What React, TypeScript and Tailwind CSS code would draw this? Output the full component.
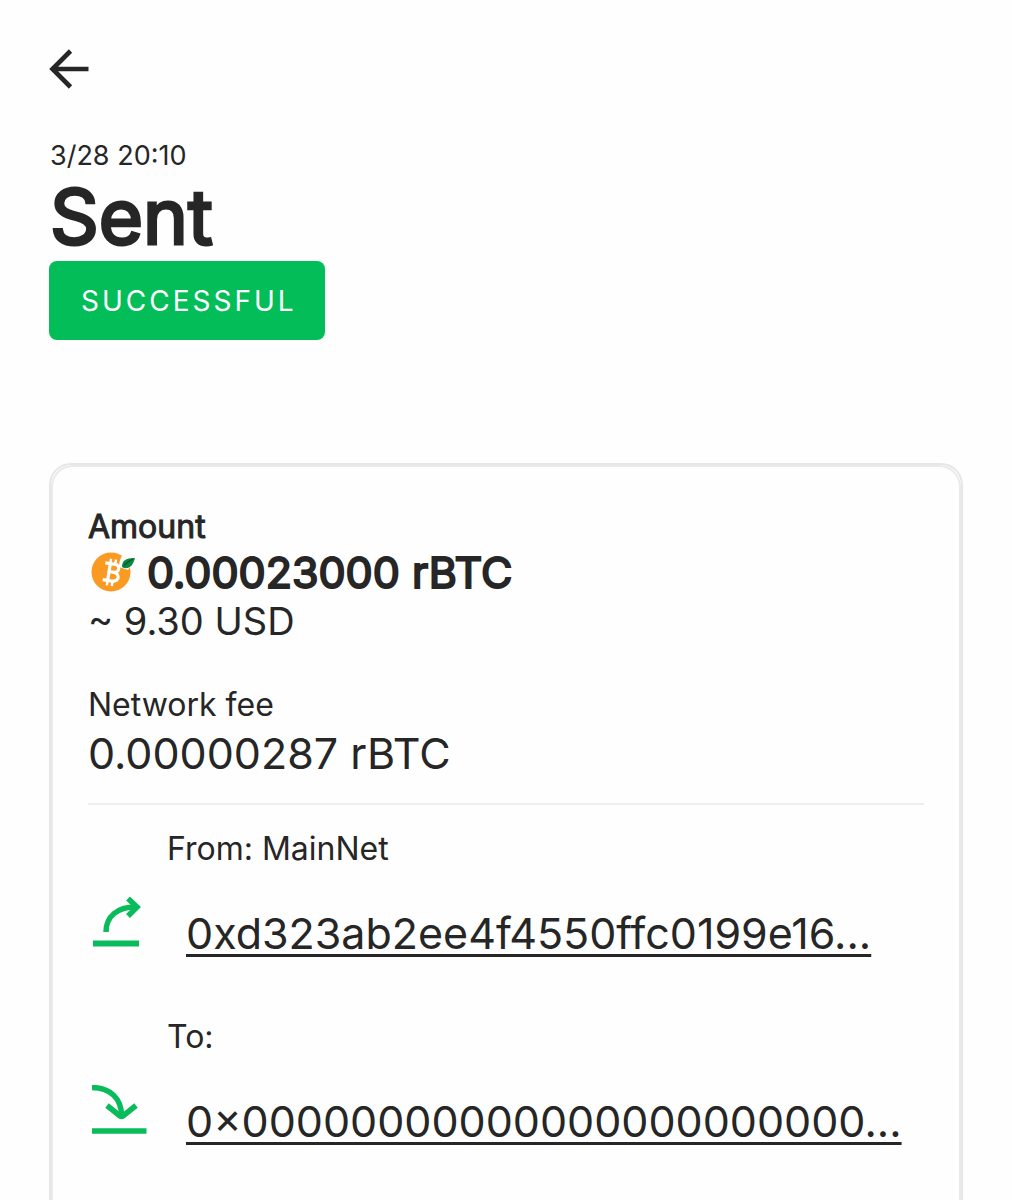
import React from "react";

interface AddressRowProps {
  label: string;
  address: string;
  icon: React.ReactNode;
}

const transaction = {
  date: "3/28 20:10",
  title: "Sent",
  status: "Successful",
  amount: "0.00023000 rBTC",
  amountUsd: "~ 9.30 USD",
  fee: "0.00000287 rBTC",
  from: "0xd323ab2ee4f4550ffc0199e16...",
  to: "0×00000000000000000000000...",
};

function BackIcon() {
  return (
    <svg width="40" height="40" viewBox="0 0 40 40" fill="none" stroke="currentColor" strokeWidth="4.6">
      <path d="M39.5 20H4M21.5 2L3.500 20l18 18" />
    </svg>
  );
}

function RbtcIcon() {
  return (
    <svg width="44" height="42" viewBox="0 0 44 42" className="shrink-0">
      <circle cx="20" cy="21" r="19.5" fill="#fb9a22" />
      <path d="M28 16C28 9 31 2 37 0l7 1v8l-7 10z" fill="#fefefe" />
      <path d="M31 16c0-6 3-9 13-9-2 7-5 11-11 10z" fill="#078a43" />
      <path d="M33 15c2-3 5-5 9-7" stroke="#0b5c33" strokeWidth="1.5" fill="none" />
      <g transform="rotate(9 21 21)" stroke="#fff" strokeWidth="3.2" fill="none">
        <path d="M13 13h10c5.5 0 5.5 8 0 8h-5M22 21c8 0 8 9 0 9h-9M18 13v17" />
        <path d="M18 8v5M23 8v5M18 30v5M23 30v5" strokeWidth="2.4" />
      </g>
    </svg>
  );
}

function SentIcon() {
  return (
    <svg width="56" height="52" viewBox="0 0 56 52" fill="none" stroke="#0abb5c" strokeWidth="5.5">
      <path d="M14 35C14 19 26 10 43 10" />
      <path d="M36 1.5L45 10l-9 9" />
      <path d="M1 46.5h46" strokeWidth="5.8" />
    </svg>
  );
}

function ReceivedIcon() {
  return (
    <svg width="56" height="52" viewBox="0 0 56 52" fill="none" stroke="#0abb5c" strokeWidth="5.5">
      <path d="M0 2.5c18 0 29.5 11 29.5 28" />
      <path d="M15 20.500l13 10.500q1.500 1 3 0l13-10.500" />
      <path d="M0 46h54.5" />
    </svg>
  );
}

function AddressRow({ label, address, icon }: AddressRowProps) {
  return (
    <div>
      <div className="pl-[79px] text-[32px] leading-10">{label}</div>
      <div className="mt-6 flex items-center gap-10">
        <div className="mb-5 w-[58px] shrink-0 pl-1">{icon}</div>
        <a
          href="#"
          className="min-w-0 whitespace-nowrap text-[43px] leading-[80px] underline decoration-[3px] underline-offset-[5px]"
        >
          {address}
        </a>
      </div>
    </div>
  );
}

export default function App() {
  return (
    <main className="h-screen overflow-hidden bg-[#fefefe] px-[49px] pt-[49px] font-['Inter',sans-serif] text-[#262626]">
      <button type="button" aria-label="Back" className="block">
        <BackIcon />
      </button>

      <header className="mt-[51px]">
        <p className="pl-px text-[27px] leading-8">{transaction.date}</p>
        <h1 className="pl-px text-[76px] leading-[89px] [-webkit-text-stroke:3px]">{transaction.title}</h1>
        <span className="inline-block rounded-lg bg-[#03bd58] pt-[21px] pr-7 pb-[19px] pl-8 text-[28px] leading-[39px] tracking-[3px] text-white uppercase">
          {transaction.status}
        </span>
      </header>

      <div className="mt-[123px] rounded-[22px] border-2 border-[#e7e7e7]">
        <section className="rounded-[22px] border-2 border-[#eaeaea] px-[35px] pt-10 pb-20">
          <h2 className="text-[32px] leading-10 [-webkit-text-stroke:1px]">Amount</h2>
          <div className="flex items-center gap-3 pl-[3px]">
            <RbtcIcon />
            <span className="text-[43px] leading-[50px] [-webkit-text-stroke:2px]">{transaction.amount}</span>
          </div>
          <p className="text-[38px] leading-[48px]">{transaction.amountUsd}</p>

          <h2 className="mt-10 text-[32px] leading-10">Network fee</h2>
          <p className="text-[43px] leading-[56px]">{transaction.fee}</p>

          <hr className="mt-[22px] mb-6 border-t-2 border-[#eeeeee]" />

          <AddressRow label="From: MainNet" address={transaction.from} icon={<SentIcon />} />
          <div className="mt-11">
            <AddressRow label="To:" address={transaction.to} icon={<ReceivedIcon />} />
          </div>
        </section>
      </div>
    </main>
  );
}
